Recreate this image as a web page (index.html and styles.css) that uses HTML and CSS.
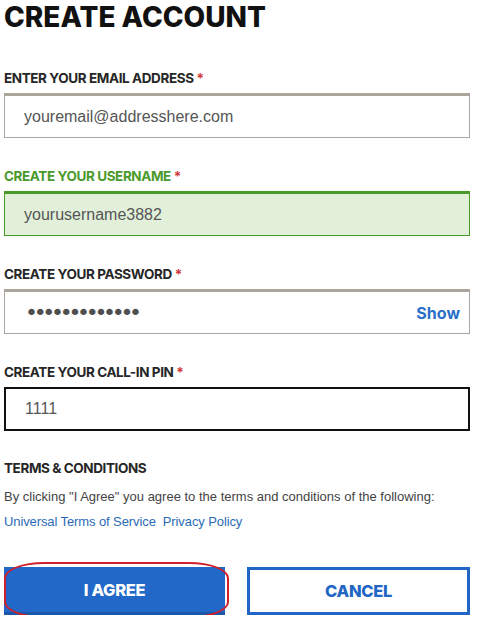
FILE: index.html
```html
<!DOCTYPE html>
<html lang="en">
<head>
  <meta charset="UTF-8">
  <title>Create Account</title>
  <link rel="stylesheet" href="styles.css">
</head>
<body>
  <form class="signup" onsubmit="return false">
    <h1>CREATE ACCOUNT</h1>

    <!-- Email -->
    <div class="field">
      <label for="email">ENTER YOUR EMAIL ADDRESS <span class="req">*</span></label>
      <div class="box">
        <input id="email" type="text" value="youremail@addresshere.com">
      </div>
    </div>

    <!-- Username (valid) -->
    <div class="field valid">
      <label for="username">CREATE YOUR USERNAME <span class="req">*</span></label>
      <div class="box">
        <input id="username" type="text" value="yourusername3882">
      </div>
    </div>

    <!-- Password -->
    <div class="field">
      <label for="password">CREATE YOUR PASSWORD <span class="req">*</span></label>
      <div class="box">
        <input id="password" class="secret" type="password" value="abcdefghijklm">
        <a class="show" href="#">Show</a>
      </div>
    </div>

    <!-- PIN (focused) -->
    <div class="field focus">
      <label for="pin">CREATE YOUR CALL-IN PIN <span class="req">*</span></label>
      <div class="box">
        <input id="pin" type="text" value="1111">
      </div>
    </div>

    <div class="terms">
      <h2>TERMS &amp; CONDITIONS</h2>
      <p>By clicking "I Agree" you agree to the terms and conditions of the following:</p>
      <div class="links">
        <a href="#">Universal Terms of Service</a>
        <a href="#">Privacy Policy</a>
      </div>
    </div>

    <div class="actions">
      <button class="btn primary circled" type="submit">I AGREE</button>
      <button class="btn outline" type="button">CANCEL</button>
    </div>
  </form>
</body>
</html>
```

FILE: styles.css
```css
* {
  margin: 0;
  padding: 0;
  box-sizing: border-box;
}

body {
  background: #fff;
  font-family: 'Liberation Sans', Arial, sans-serif;
  color: #222;
}

.signup {
  width: 470px;
  padding-left: 4px;
}

.signup h1 {
  font-family: Inter, sans-serif;
  font-weight: 800;
  font-size: 28px;
  line-height: 34px;
  color: #111;
  letter-spacing: 0;
  margin-bottom: 36px;
}

.field {
  margin-bottom: 30px;
}

.field label,
.terms h2 {
  display: block;
  font-family: Inter, sans-serif;
  font-weight: 700;
  font-size: 13.5px;
  line-height: 16px;
  color: #262626;
  letter-spacing: -0.4px;
  margin-bottom: 7px;
}

.req {
  color: #d0393b;
}

.box {
  display: flex;
  align-items: center;
  height: 45px;
  border: 1px solid #aaa8a4;
  border-top: 3px solid #aca69c;
  background: #fff;
}

.box input {
  flex: 1;
  min-width: 0;
  height: 100%;
  border: none;
  outline: none;
  background: transparent;
  padding-left: 19px;
  font-family: 'Liberation Sans', Arial, sans-serif;
  font-size: 16px;
  color: #555;
}

.box input.secret {
  font-family: 'DejaVu Sans', sans-serif;
  font-size: 22px;
  padding-left: 20px;
  letter-spacing: -4.3px;
  color: #4f4f4f;
}

.show {
  font-family: Inter, sans-serif;
  font-weight: 700;
  font-size: 16px;
  color: #2a6fc9;
  text-decoration: none;
  padding-right: 9px;
}

.valid label {
  color: #4a9a2b;
}

.valid .box {
  background: #e2f0da;
  border: 1px solid #4a9a2b;
  border-top: 3px solid #4a9a2b;
}

.focus .box {
  height: 44px;
  border: 2px solid #111;
}

.terms {
  margin-top: -1px;
}

.terms h2 {
  margin-bottom: 11px;
}

.terms p {
  font-size: 13px;
  line-height: 20px;
  color: #444;
  margin-bottom: 5px;
}

.links {
  display: flex;
  gap: 7px;
  font-size: 13px;
  line-height: 20px;
  letter-spacing: -0.1px;
}

.links a {
  color: #2b6bb5;
  text-decoration: none;
}

.actions {
  display: grid;
  grid-template-columns: 221px 223px;
  gap: 22px;
  margin-top: 35px;
}

.btn {
  height: 48px;
  font-family: Inter, sans-serif;
  font-weight: 800;
  font-size: 16.5px;
  letter-spacing: -0.3px;
  cursor: pointer;
}

.primary {
  background: #2168c8;
  color: #fff;
  border: none;
  border-bottom: 3px solid #1a57aa;
}

.outline {
  background: #fff;
  color: #2166c4;
  border: 3px solid #2166c4;
}

.circled {
  position: relative;
}

/* hand-drawn highlight ring */
.circled::after {
  content: '';
  position: absolute;
  top: -5px;
  bottom: -6px;
  left: 0;
  right: -4px;
  border: 2px solid #d0202a;
  border-radius: 40px / 16px;
  pointer-events: none;
}
```
